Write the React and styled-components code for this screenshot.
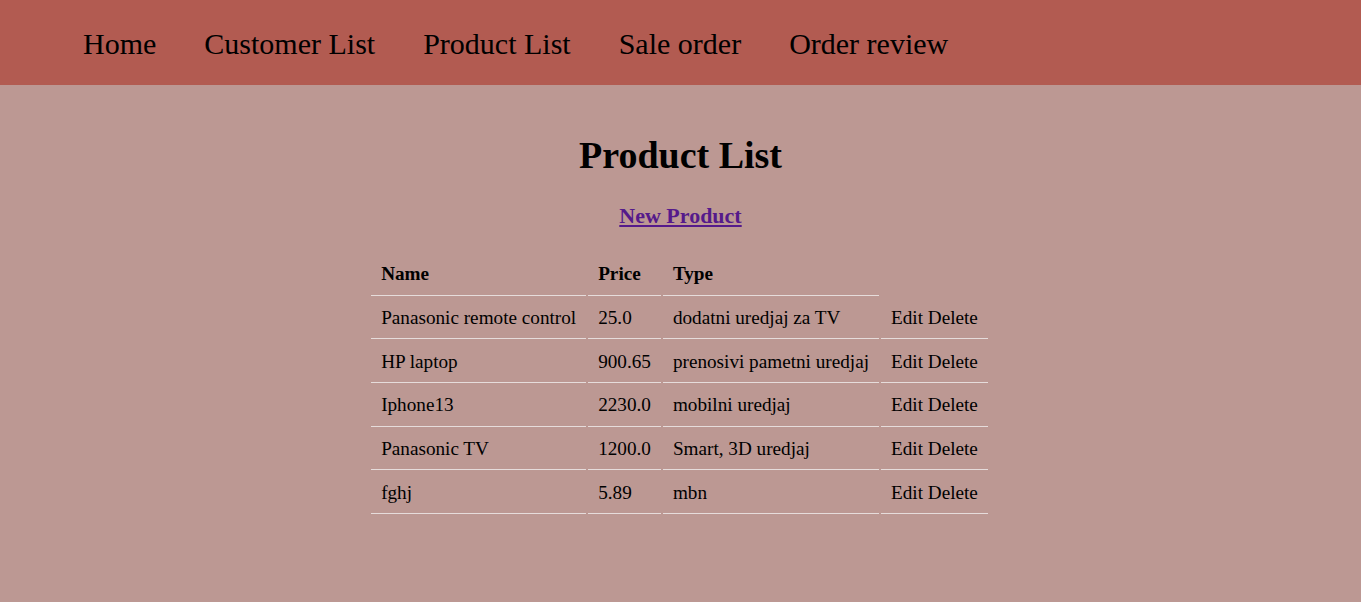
import React from 'react';
import styled, { createGlobalStyle } from 'styled-components'

const GlobalStyle = createGlobalStyle`
    body {
        margin: 0;
        background-color: #bc9893;
        font-family: "Liberation Serif", "Times New Roman", serif;
        color: #000;
    }
`

const Nav = styled.nav`
    height: 85px;
    background-color: #b25b51;
    display: flex;
    align-items: center;
    padding-left: 83px;
    padding-top: 2px;
    box-sizing: border-box;
    gap: 48px;
`
const NavItem = styled.a`
    font-size: 30px;
    color: #000;
    text-decoration: none;
    cursor: pointer;
`
const Main = styled.main`
    display: flex;
    flex-direction: column;
    align-items: center;
`
const Title = styled.h1`
    font-size: 38px;
    font-weight: 700;
    margin: 48px 0 0;
`
const NewLink = styled.a`
    font-size: 22px;
    font-weight: 700;
    color: #551a8b;
    text-decoration: underline;
    margin-top: 26px;
    cursor: pointer;
`
const Table = styled.table`
    margin-top: 23px;
    font-size: 19.2px;
    border-spacing: 2px;
    transform: translateX(-1px);
`
const Th = styled.th`
    text-align: left;
    padding: 9.4px 10px 9.3px;
    border-bottom: ${p => (p.$empty ? 'none' : '1px solid #e6dcdb')};
`
const Td = styled.td`
    padding: 9.4px 10px 9.3px;
    border-bottom: 1px solid #e6dcdb;
    white-space: nowrap;
`
const Action = styled.span`
    cursor: pointer;
`

const products = [
    { name: 'Panasonic remote control', price: '25.0', type: 'dodatni uredjaj za TV' },
    { name: 'HP laptop', price: '900.65', type: 'prenosivi pametni uredjaj' },
    { name: 'Iphone13', price: '2230.0', type: 'mobilni uredjaj' },
    { name: 'Panasonic TV', price: '1200.0', type: 'Smart, 3D uredjaj' },
    { name: 'fghj', price: '5.89', type: 'mbn' },
]

const App = () => {
  return (
    <>
        <GlobalStyle />
        <Nav>
            <NavItem>Home</NavItem>
            <NavItem>Customer List</NavItem>
            <NavItem>Product List</NavItem>
            <NavItem>Sale order</NavItem>
            <NavItem>Order review</NavItem>
        </Nav>
        <Main>
            <Title>Product List</Title>
            <NewLink>New Product</NewLink>
            <Table>
                <thead>
                    <tr>
                        <Th>Name</Th>
                        <Th>Price</Th>
                        <Th>Type</Th>
                        <Th $empty></Th>
                    </tr>
                </thead>
                <tbody>
                    {products.map(p => (
                        <tr key={p.name}>
                            <Td>{p.name}</Td>
                            <Td>{p.price}</Td>
                            <Td>{p.type}</Td>
                            <Td><Action>Edit</Action> <Action>Delete</Action></Td>
                        </tr>
                    ))}
                </tbody>
            </Table>
        </Main>
    </>
  )
}

export default App
